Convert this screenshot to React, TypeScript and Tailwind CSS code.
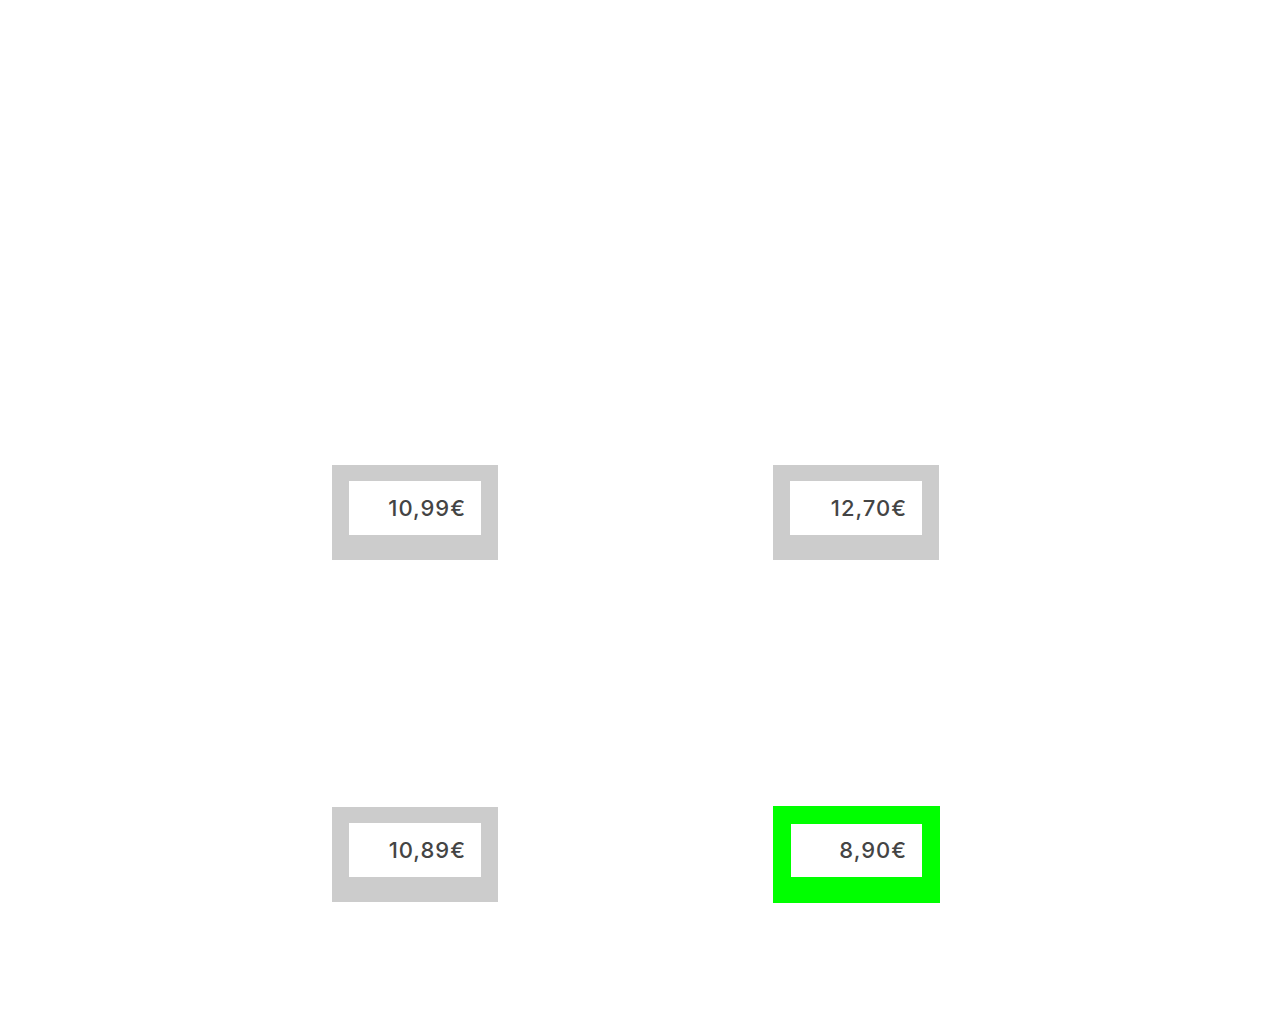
import React from 'react';

interface Offer {
  price: string;
  best?: boolean;
}

const offers: Offer[] = [
  { price: '10,99€' },
  { price: '12,70€' },
  { price: '10,89€' },
  { price: '8,90€', best: true },
];

const PriceTag: React.FC<{ offer: Offer }> = ({ offer }) => {
  if (offer.best) {
    return (
      <div className="w-[167px] h-[97px] bg-[#00ff00] pt-[18px] px-[18px] pb-[26px] -mt-px">
        <div className="h-[53px] bg-white flex items-center justify-end pr-[15px] text-[22px] tracking-[1px] font-medium text-[#444] [font-family:Inter,sans-serif]">
          {offer.price}
        </div>
      </div>
    );
  }
  return (
    <div className="w-[166px] h-[95px] bg-[#cccccc] pt-[16px] px-[17px] pb-[25px]">
      <div className="h-[54px] bg-white flex items-center justify-end pr-[15px] text-[22px] tracking-[1px] font-medium text-[#444] [font-family:Inter,sans-serif]">
        {offer.price}
      </div>
    </div>
  );
};

export default function App() {
  return (
    <div className="w-[1280px] h-[1024px] bg-white pt-[465px] pl-[332px]">
      <div className="grid grid-cols-[441px_167px] grid-rows-[342px_97px]">
        {offers.map((o) => (
          <div key={o.price}>
            <PriceTag offer={o} />
          </div>
        ))}
      </div>
    </div>
  );
}
